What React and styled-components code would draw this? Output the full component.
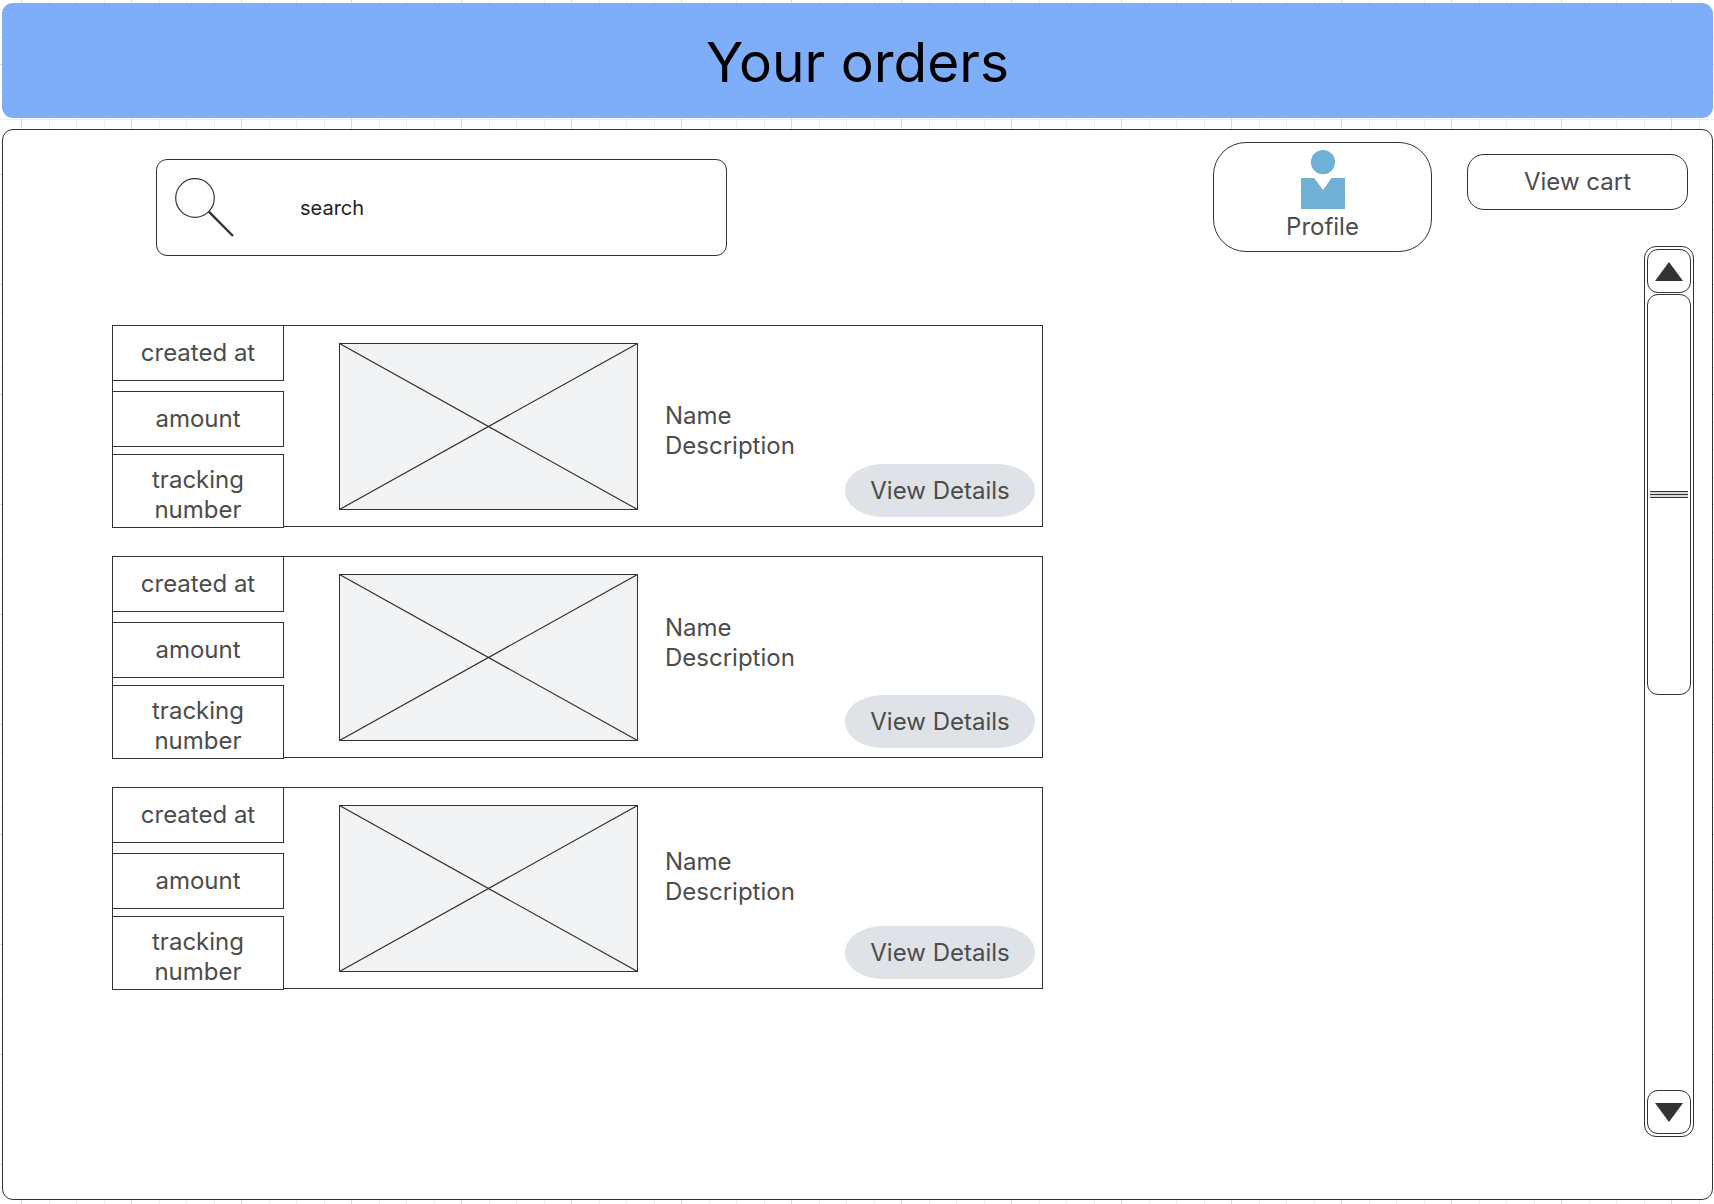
import React from "react";
import styled, { createGlobalStyle } from "styled-components";

const ink = "#333333";
const textColor = "#4c4c4c";

const GlobalStyle = createGlobalStyle`
  *, *::before, *::after { box-sizing: border-box; }
  body {
    margin: 0;
    color: ${textColor};
    font-family: Inter, "Liberation Sans", sans-serif;
    font-size: 24px;
    line-height: 30px;
  }
  button, input {
    margin: 0;
    padding: 0;
    border: 0;
    background: none;
    color: inherit;
    font: inherit;
  }
  button { cursor: pointer; }
  svg { display: block; flex: none; }
`;

const gridLines = (direction) => `linear-gradient(
  ${direction},
  #dcdcdf 0 1px, transparent 1px 28px,
  #ededf0 28px 29px, transparent 29px 55px,
  #ededf0 55px 56px, transparent 56px 83px,
  #ededf0 83px 84px, transparent 84px
)`;

const Page = styled.div`
  display: flex;
  flex-direction: column;
  gap: 11px;
  min-height: 100vh;
  padding: 3px 1px 4px 2px;
  background-color: #ffffff;
  background-image: ${gridLines("to right")}, ${gridLines("to bottom")};
  background-size: 110px 110px;
  background-position: 21px 64px;
`;

const Banner = styled.header`
  display: flex;
  align-items: center;
  justify-content: center;
  min-height: 115px;
  padding-top: 3px;
  border-radius: 11px;
  background: #7eaef9;
`;

const Title = styled.h1`
  margin: 0;
  color: #000000;
  font-size: 55px;
  font-weight: 400;
  line-height: 68px;
`;

const Panel = styled.div`
  display: flex;
  flex: 1;
  gap: 35px;
  padding-right: 18px;
  border: 1px solid ${ink};
  border-radius: 11px;
  background: #ffffff;
`;

const Main = styled.main`
  display: flex;
  flex: 1;
  flex-direction: column;
  gap: 69px;
  min-width: 0;
  padding-top: 12px;
`;

const Toolbar = styled.div`
  display: flex;
  align-items: flex-start;
  justify-content: space-between;
  gap: 24px;
  padding-left: 153px;
`;

const SearchBox = styled.label`
  display: flex;
  flex: 0 1 571px;
  align-items: center;
  gap: 64px;
  min-width: 0;
  height: 97px;
  margin-top: 17px;
  padding: 0 17px;
  border: 1px solid ${ink};
  border-radius: 11px;
`;

const SearchInput = styled.input`
  flex: 1;
  min-width: 0;
  height: 40px;
  color: #222222;
  font-size: 20px;
  outline: none;
  &::placeholder { color: #222222; opacity: 1; }
`;

const ProfileButton = styled.button`
  display: flex;
  flex-direction: column;
  align-items: center;
  justify-content: center;
  gap: 3px;
  width: 219px;
  height: 110px;
  padding-bottom: 2px;
  border: 1px solid ${ink};
  border-radius: 33px;
`;

const Orders = styled.ul`
  display: flex;
  flex-direction: column;
  gap: 29px;
  margin: 0;
  padding: 0 0 24px 109px;
  list-style: none;
`;

const OrderCard = styled.li`
  display: flex;
  max-width: 931px;
  height: 202px;
  border: 1px solid ${ink};
`;

const Meta = styled.div`
  display: flex;
  flex: none;
  flex-direction: column;
  gap: 7px;
  width: 172px;
  margin: -1px 0 -2px -1px;
`;

const MetaCell = styled.div`
  display: flex;
  flex: none;
  align-items: center;
  justify-content: center;
  height: ${(p) => (p.$tall ? 74 : 56)}px;
  padding: ${(p) => (p.$tall ? "8px 20px 0" : "0 20px")};
  border: 1px solid ${ink};
  background: #ffffff;
  text-align: center;
  &:first-child { margin-bottom: 3px; }
`;

const Thumbnail = styled.svg`
  align-self: center;
  margin-left: 55px;
`;

const Details = styled.div`
  display: flex;
  flex: 1;
  flex-direction: column;
  justify-content: space-between;
  padding: ${(p) => p.$top}px 7px 9px 27px;
`;

const DetailsButton = styled.button`
  align-self: flex-end;
  width: 190px;
  height: 53px;
  border-radius: 38px / 26px;
  background: #dfe2e7;
`;

const Side = styled.aside`
  display: flex;
  flex: 0 0 227px;
  flex-direction: column;
  gap: 36px;
  padding: 24px 0 62px;
`;

const CartButton = styled.button`
  width: 221px;
  height: 56px;
  border: 1px solid ${ink};
  border-radius: 17px;
`;

const Scrollbar = styled.div`
  display: flex;
  flex: 1;
  flex-direction: column;
  align-self: flex-end;
  gap: 1px;
  width: 50px;
  padding: 2px;
  border: 1px solid ${ink};
  border-radius: 12px;
`;

const ArrowButton = styled.button`
  display: flex;
  align-items: center;
  justify-content: center;
  height: 44px;
  border: 1px solid ${ink};
  border-radius: 11px;
`;

const Track = styled.div`
  flex: 1;
`;

const Thumb = styled.div`
  display: flex;
  align-items: center;
  justify-content: center;
  height: 401px;
  border: 1px solid ${ink};
  border-radius: 11px;
`;

const orders = [
  { id: 1, top: 75 },
  { id: 2, top: 56 },
  { id: 3, top: 59 },
];

function Order({ top }) {
  return (
    <OrderCard>
      <Meta>
        <MetaCell>created at</MetaCell>
        <MetaCell>amount</MetaCell>
        <MetaCell $tall>tracking number</MetaCell>
      </Meta>
      <Thumbnail width="299" height="167" viewBox="0 0 299 167" role="img" aria-label="Product image">
        <rect x="0.5" y="0.5" width="298" height="166" fill="#f1f3f5" stroke={ink} />
        <path d="M0.5 0.5L298.5 166.5M298.5 0.5L0.5 166.5" stroke={ink} strokeWidth="1.2" />
      </Thumbnail>
      <Details $top={top}>
        <div>
          <div>Name</div>
          <div>Description</div>
        </div>
        <DetailsButton type="button">View Details</DetailsButton>
      </Details>
    </OrderCard>
  );
}

export default function App() {
  return (
    <>
      <GlobalStyle />
      <Page>
        <Banner>
          <Title>Your orders</Title>
        </Banner>
        <Panel>
          <Main>
            <Toolbar>
              <SearchBox>
                <svg width="62" height="60" viewBox="0 0 62 60" fill="none" stroke={ink} aria-hidden="true">
                  <circle cx="21" cy="20" r="19.3" strokeWidth="1.2" />
                  <path d="M34.8 33.7L59 58" strokeWidth="2.4" />
                </svg>
                <SearchInput type="text" placeholder="search" aria-label="search" />
              </SearchBox>
              <ProfileButton type="button">
                <svg width="44" height="59" viewBox="0 0 44 59" fill="#70b0d6" aria-hidden="true">
                  <circle cx="22" cy="12.1" r="12.1" />
                  <path d="M0 28H13.2L22 40L30.5 28H44V59H0Z" />
                </svg>
                Profile
              </ProfileButton>
            </Toolbar>
            <Orders>
              {orders.map((order) => (
                <Order key={order.id} top={order.top} />
              ))}
            </Orders>
          </Main>
          <Side>
            <CartButton type="button">View cart</CartButton>
            <Scrollbar>
              <ArrowButton type="button" aria-label="Scroll up">
                <svg width="28" height="19" viewBox="0 0 28 19" fill={ink}>
                  <path d="M14 0L28 19H0Z" />
                </svg>
              </ArrowButton>
              <Track>
                <Thumb>
                  <svg width="38" height="7" viewBox="0 0 38 7" aria-hidden="true">
                    <rect width="38" height="7" fill="#d9d9db" />
                    <path d="M0 0.5H38M0 3.5H38M0 6.5H38" stroke={ink} />
                  </svg>
                </Thumb>
              </Track>
              <ArrowButton type="button" aria-label="Scroll down">
                <svg width="28" height="19" viewBox="0 0 28 19" fill={ink}>
                  <path d="M0 0H28L14 19Z" />
                </svg>
              </ArrowButton>
            </Scrollbar>
          </Side>
        </Panel>
      </Page>
    </>
  );
}
